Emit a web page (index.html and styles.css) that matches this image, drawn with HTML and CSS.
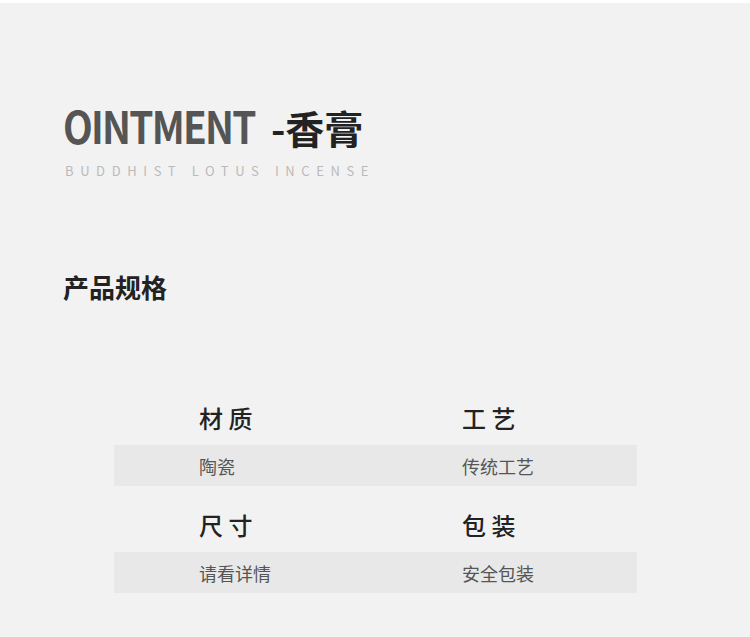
FILE: index.html
```html
<!DOCTYPE html>
<html lang="zh">
<head>
<meta charset="utf-8">
<link rel="stylesheet" href="styles.css">
</head>
<body>
<div class="page">
  <header class="hero">
    <h1 class="title"><span class="en">OINTMENT</span><span class="cn">-香膏</span></h1>
    <p class="sub">BUDDHIST LOTUS INCENSE</p>
  </header>
  <h2 class="section">产品规格</h2>
  <div class="spec">
    <div class="head"><span>材 质</span><span>工 艺</span></div>
    <div class="val"><span>陶瓷</span><span>传统工艺</span></div>
    <div class="head"><span>尺 寸</span><span>包 装</span></div>
    <div class="val"><span>请看详情</span><span>安全包装</span></div>
  </div>
</div>
</body>
</html>
```
FILE: styles.css
```css
* { box-sizing: border-box; margin: 0; padding: 0; }
html, body { width: 750px; height: 637px; overflow: hidden; background: #fff; }
body { font-family: "Noto Sans CJK SC", "Noto Sans", sans-serif; }
.page {
  margin-top: 3px;
  height: 634px;
  background: #f2f2f2;
  padding: 0 0 0 63px;
}
.hero { padding-top: 94px; }
.title { display: flex; align-items: baseline; line-height: 56px; font-weight: 700; }
.en { display: inline-block; font-size: 44px; color: #555; letter-spacing: -2px; transform: scaleX(0.88); transform-origin: left center; }
.cn { font-size: 39px; color: #222; margin-left: -10px; }
.sub { margin-top: 8px; margin-left: 2px; font-size: 13px; letter-spacing: 6.6px; color: #bababa; line-height: 16px; }
.section { margin-top: 90px; font-size: 26px; line-height: 36px; font-weight: 700; color: #222; }
.spec { margin: 90px 0 0 51px; width: 523px; }
.head { display: grid; grid-template-columns: 263px 1fr; padding-left: 85px; padding-bottom: 5px; height: 50px; align-items: center; font-size: 24px; color: #222; font-weight: 500; }
.val { display: grid; grid-template-columns: 263px 1fr; padding-left: 85px; height: 41px; align-items: center; font-size: 18px; color: #555; background: #e8e8e8; margin-bottom: 16px; }
```
